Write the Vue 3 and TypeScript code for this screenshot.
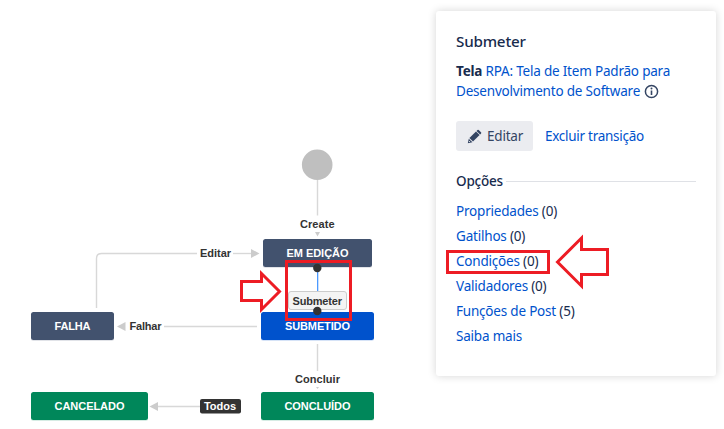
<script setup lang="ts">
interface StatusNode {
  label: string
  x: number
  y: number
  w: number
  textW: number
  fill: string
}
interface EdgeLabel {
  label: string
  x: number
  y: number
  w: number
  light?: boolean
}
interface Option {
  name: string
  count?: number
}

const nodes: StatusNode[] = [
  { label: 'EM EDIÇÃO', x: 263, y: 239, w: 109, textW: 62, fill: '#42526e' },
  { label: 'SUBMETIDO', x: 261, y: 312, w: 113, textW: 65, fill: '#0052cc' },
  { label: 'FALHA', x: 31, y: 312, w: 83, textW: 36, fill: '#42526e' },
  { label: 'CANCELADO', x: 31, y: 392, w: 117, textW: 70, fill: '#00875a' },
  { label: 'CONCLUÍDO', x: 261, y: 392, w: 113, textW: 66, fill: '#00875a' },
]

const labels: EdgeLabel[] = [
  { label: 'Create', x: 300, y: 228, w: 34.5 },
  { label: 'Editar', x: 200, y: 257, w: 31 },
  { label: 'Falhar', x: 129.5, y: 330, w: 32 },
  { label: 'Concluir', x: 295, y: 383, w: 45 },
  { label: 'Submeter', x: 292.5, y: 305, w: 49.5 },
  { label: 'Todos', x: 204, y: 410, w: 32, light: true },
]

const options: Option[] = [
  { name: 'Propriedades', count: 0 },
  { name: 'Gatilhos', count: 0 },
  { name: 'Condições', count: 0 },
  { name: 'Validadores', count: 0 },
  { name: 'Funções de Post', count: 5 },
  { name: 'Saiba mais' },
]
</script>

<template>
  <main class="page">
    <svg class="diagram" width="436" height="429" viewBox="0 0 436 429">
      <g class="edges">
        <path d="M317.5 180V215.5" />
        <path d="M96.5 308V258.5Q96.5 253.500 101.5 253.5H197" />
        <path d="M233 253.5H252" />
        <path d="M164 326.5H257" />
        <path d="M317.5 344V371" />
        <path d="M157 406.5H200" />
      </g>
      <g class="heads">
        <path d="M315 232H320L317.5 236.5Z" />
        <path d="M251 249V258L259.5 253.5Z" />
        <path d="M125.5 322V331L117 326.5Z" />
        <path d="M158 402V411L149.5 406.5Z" />
        <path d="M316 387H319L317.5 389Z" />
      </g>
      <circle cx="317.2" cy="164.8" r="15.3" fill="#bfbfbf" />
      <g v-for="n in nodes" :key="n.label">
        <rect :x="n.x" :y="n.y + 1" :width="n.w" height="28" rx="2.5" :fill="n.fill" opacity=".16" />
        <rect :x="n.x" :y="n.y" :width="n.w" height="28" rx="2.5" :fill="n.fill" />
        <text class="status" :x="n.x + (n.w - n.textW) / 2" :y="n.y + 18" :textLength="n.textW">{{ n.label }}</text>
      </g>
      <rect x="317" y="268" width="1.3" height="23" fill="#4c9aff" />
      <rect x="288.5" y="291.5" width="58" height="18" rx="2.5" fill="#f4f4f4" stroke="#ccc" />
      <rect x="200" y="399" width="41" height="14.5" rx="2" fill="#333" />
      <text
        v-for="l in labels"
        :key="l.label"
        class="label"
        :class="{ light: l.light }"
        :x="l.x"
        :y="l.y"
        :textLength="l.w"
      >{{ l.label }}</text>
      <circle cx="317.3" cy="268" r="4.2" fill="#333" />
      <circle cx="317.3" cy="311" r="4.2" fill="#333" />
    </svg>

    <aside class="panel">
      <h2>Submeter</h2>
      <div class="screen">
        <div><b>Tela</b> <a>RPA: Tela de Item Padrão para</a></div>
        <div class="with-icon">
          <a>Desenvolvimento de Software</a>
          <svg width="15" height="15" viewBox="0 0 15 15">
            <circle cx="7.5" cy="7.5" r="6.1" fill="none" stroke="#344563" stroke-width="1.5" />
            <path d="M7.5 6.5V11" stroke="#344563" stroke-width="1.6" />
            <circle cx="7.5" cy="4.5" r="1" fill="#344563" />
          </svg>
        </div>
      </div>
      <div class="actions">
        <button type="button">
          <svg width="15" height="15" viewBox="0 0 15 15">
            <path d="M.8 14.3L1.800 9.700L5.400 13.300Z" fill="#344563" />
            <path d="M2.400 9L9 2.400L12.600 6L6 12.600Z" fill="#344563" />
            <path d="M9.500 1.900L10.500 .9Q11.100 .4 11.700 1L14 3.300Q14.600 3.900 14.100 4.500L13.100 5.500Z" fill="#344563" />
            <circle cx="2.500" cy="12.500" r=".6" fill="#ebecf0" />
          </svg>
          <span>Editar</span>
        </button>
        <a>Excluir transição</a>
      </div>
      <div class="legend"><span>Opções</span><i></i></div>
      <ul>
        <li v-for="o in options" :key="o.name">
          <a>{{ o.name }}</a><template v-if="o.count !== undefined"> ({{ o.count }})</template>
        </li>
      </ul>
    </aside>

    <svg class="marks" width="724" height="429" viewBox="0 0 724 429">
      <rect x="286.5" y="261.5" width="64" height="58" />
      <path d="M241.5 281.5H261.5V273.5L279.5 291.5L261.5 309.5V300.5H241.5Z" />
      <rect x="447.5" y="251.5" width="101" height="21" />
      <path d="M557.5 262L581.5 238V249.5H607.5V274.5H581.5V286Z" />
    </svg>
  </main>
</template>

<style>
body {
  margin: 0;
  background: #fff;
}
</style>

<style scoped>
.page {
  position: relative;
  display: flex;
  width: 724px;
  height: 429px;
  overflow: hidden;
  background: #fff;
}
.diagram {
  flex: none;
  display: block;
}
.edges path {
  fill: none;
  stroke: #d8d8d8;
  stroke-width: 1.4;
}
.heads path {
  fill: #ccc;
}
.status,
.label {
  font: bold 11px 'Liberation Sans', Arial, sans-serif;
  fill: #fff;
}
.label {
  fill: #333;
}
.label.light {
  fill: #fff;
}
.marks {
  position: absolute;
  inset: 0;
  pointer-events: none;
}
.marks rect,
.marks path {
  fill: none;
  stroke: #ed1c24;
  stroke-width: 3;
}
.panel {
  box-sizing: border-box;
  flex: none;
  width: 280px;
  height: 365px;
  margin-top: 11px;
  padding: 20px 20px 0;
  border-radius: 3px;
  background: #fff;
  box-shadow: 0 0 8px rgba(0, 0, 0, 0.17);
  font: 13.5px/20px 'Noto Sans', 'Open Sans', sans-serif;
  letter-spacing: -0.2px;
  color: #172b4d;
  white-space: nowrap;
}
h2 {
  margin: 0;
  font-size: 15.2px;
  font-weight: 500;
  line-height: 20px;
}
a {
  color: #0052cc;
}
.screen {
  margin-top: 10px;
}
.with-icon {
  display: flex;
  align-items: center;
  gap: 4px;
}
.actions {
  display: flex;
  align-items: center;
  gap: 12px;
  margin-top: 20px;
}
.actions > a {
  letter-spacing: -0.27px;
}
button {
  display: flex;
  align-items: center;
  gap: 5px;
  width: 77px;
  height: 30px;
  padding: 0 0 0 11px;
  border: 0;
  border-radius: 3px;
  background: #ebecf0;
  color: #344563;
  font: inherit;
  letter-spacing: inherit;
}
.legend {
  display: flex;
  align-items: center;
  gap: 3px;
  margin-top: 20px;
  font-weight: 500;
}
.legend i {
  flex: 1;
  height: 1px;
  margin-top: 1px;
  background: #dfe1e6;
}
ul {
  margin: 8px 0 0;
  padding: 0;
  list-style: none;
}
li {
  height: 25px;
  line-height: 25px;
}
</style>
